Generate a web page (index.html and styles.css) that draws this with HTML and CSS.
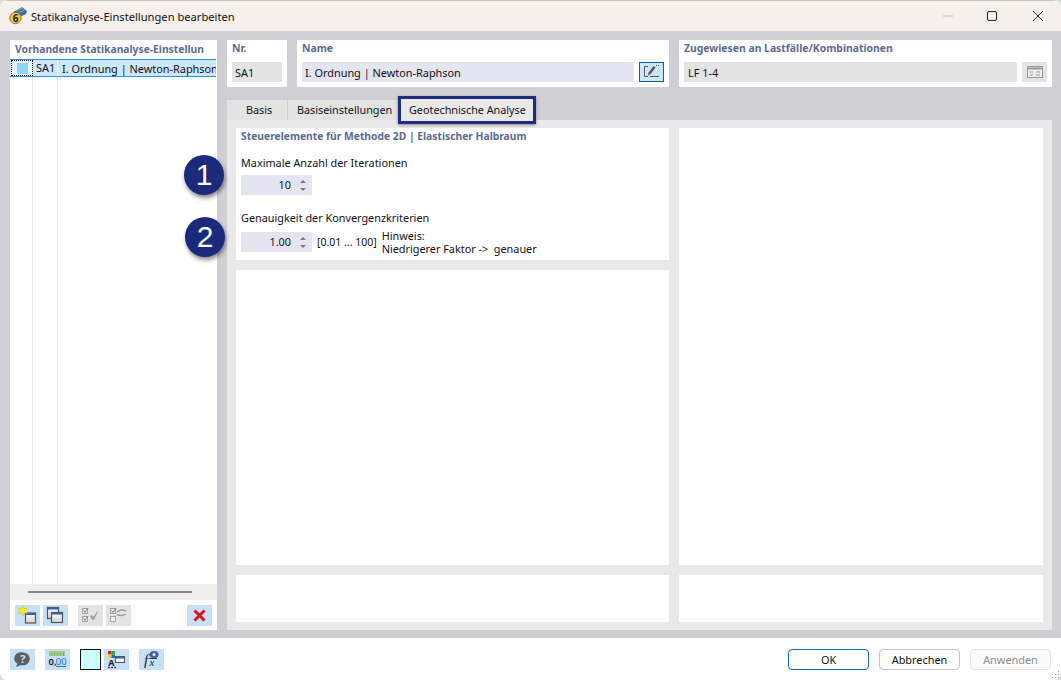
FILE: index.html
```html
<!DOCTYPE html>
<html lang="de">
<head>
<meta charset="utf-8">
<title>Statikanalyse-Einstellungen bearbeiten</title>
<link rel="stylesheet" href="styles.css">
</head>
<body>
<div class="window">
  <header class="titlebar">
    <svg class="app-icon" width="18" height="18" viewBox="0 0 18 18"><path d="M5 5l8-4.500 4.500 3.500-1 3L9 10z" fill="#3f6f9e" stroke="#26486b" stroke-width=".6"/><path d="M7 4l7-3M9 6l6.500-3" stroke="#9fc0dc" stroke-width=".7"/><circle cx="6.500" cy="11" r="5.700" fill="#f0c83a" stroke="#77631c" stroke-width=".8"/><text x="6.500" y="14.700" class="six">6</text></svg>
    <span class="title-text">Statikanalyse-Einstellungen bearbeiten</span>
    <div class="win-controls">
      <svg width="10" height="2" viewBox="0 0 10 2"><path d="M0 1h10" stroke="#c0bcba"/></svg>
      <svg class="max" width="10" height="10" viewBox="0 0 10 10"><rect x=".5" y=".5" width="9" height="9" rx="1.500" fill="none" stroke="#222"/></svg>
      <svg class="close" width="10" height="10" viewBox="0 0 10 10"><path d="M0 0l10 10M10 0L0 10" stroke="#222"/></svg>
    </div>
  </header>
  <main class="body">
    <aside class="left">
      <div class="left-title">Vorhandene Statikanalyse-Einstellun</div>
      <div class="list">
        <div class="row">
          <span class="swatch-cell"><i class="swatch"></i></span>
          <span class="sa-cell">SA1</span>
          <span class="name-cell">I. Ordnung | Newton-Raphson</span>
        </div>
        <div class="guides"><i></i><i></i></div>
      </div>
      <div class="hscroll"><i></i></div>
      <div class="left-tools">
        <button class="tool"><svg width="25" height="21" viewBox="0 0 25 21"><defs><linearGradient id="w" x1="0" y1="0" x2="0" y2="1"><stop offset="0" stop-color="#fafafa"/><stop offset="1" stop-color="#d4d4d4"/></linearGradient></defs><rect x="10.500" y="8" width="10" height="10" fill="url(#w)" stroke="#555" stroke-width="1.200"/><rect x="10.500" y="8" width="10" height="2" fill="#3b5fa8"/><path d="M7.700.2L8.900 3.600 12.500 3 10.100 5.700 12.500 8.500 8.900 7.800 7.700 11.200 6.500 7.800 2.900 8.500 5.300 5.700 2.900 3 6.500 3.600z" fill="#f8f020" stroke="#c9bd10" stroke-width=".4"/></svg></button>
        <button class="tool"><svg width="25" height="21" viewBox="0 0 25 21"><rect x="4.500" y="2.500" width="11" height="11" fill="url(#w)" stroke="#555" stroke-width="1.200"/><rect x="4.500" y="2.500" width="11" height="2" fill="#3b5fa8"/><rect x="8.500" y="7.500" width="11" height="10" fill="url(#w)" stroke="#555" stroke-width="1.200"/><rect x="8.500" y="7.500" width="11" height="2" fill="#3b5fa8"/></svg></button>
        <button class="tool off"><svg width="25" height="21" viewBox="0 0 25 21"><g fill="#eee" stroke="#a5a5a5"><rect x="4.500" y="3.500" width="5" height="5"/><rect x="4.500" y="11.500" width="5" height="5"/></g><path d="M5.500 5.500l1.500 2 3-4.500M5.500 13.500l1.500 2 3-4.500" fill="none" stroke="#7d7d7d"/><path d="M12 11l2-1 1.500 2 3.500-5.500.8.500-4 8h-1.500z" fill="#9c9c9c"/></svg></button>
        <button class="tool off"><svg width="25" height="21" viewBox="0 0 25 21"><g fill="#eee" stroke="#a5a5a5"><rect x="4.500" y="3.500" width="5" height="5"/><rect x="4.500" y="11.500" width="5" height="5"/></g><path d="M5.500 5.500l1.500 2 3-4.500" fill="none" stroke="#7d7d7d"/><path d="M11 7c3-2.500 6-2.500 9-1M20 9c-3 2-6 2-9 .5" fill="none" stroke="#9c9c9c" stroke-width="1.500"/></svg></button>
        <button class="tool del"><svg width="25" height="21" viewBox="0 0 25 21"><path d="M7.500 5.500l10 10M17.500 5.500l-10 10" stroke="#e2101a" stroke-width="3"/></svg></button>
      </div>
    </aside>
    <section class="right">
      <div class="top">
        <div class="card nr">
          <div class="card-title">Nr.</div>
          <div class="field gray">SA1</div>
        </div>
        <div class="card name">
          <div class="card-title">Name</div>
          <div class="field-row">
            <div class="field lilac grow">I. Ordnung | Newton-Raphson</div>
            <button class="edit-btn"><svg width="23" height="18" viewBox="0 0 23 18"><path d="M8 3.500H4.500v10H8M10 13.500h9" fill="none" stroke="#555"/><path d="M8 12.500l.6-3 5-6.500 2 1.500-5 6.500z" fill="#555"/><path d="M16 2.500h3" stroke="#555" stroke-dasharray="1 1"/></svg></button>
          </div>
        </div>
        <div class="card assigned">
          <div class="card-title">Zugewiesen an Lastfälle/Kombinationen</div>
          <div class="field-row">
            <div class="field gray grow lf">LF 1-4</div>
            <span class="list-btn"><svg width="16" height="12" viewBox="0 0 16 12"><rect x=".5" y=".5" width="15" height="11" fill="#eee" stroke="#979797"/><path d="M.5 2.500h15" stroke="#979797" stroke-width="2"/><path d="M3 6h3M9 6h4M3 9h3M9 9h4" stroke="#979797"/></svg></span>
          </div>
        </div>
      </div>
      <nav class="tabs">
        <span class="tab">Basis</span>
        <span class="tab">Basiseinstellungen</span>
        <span class="tab active">Geotechnische Analyse</span>
      </nav>
      <div class="tab-body">
        <div class="col">
          <div class="panel controls">
            <div class="card-title">Steuerelemente für Methode 2D | Elastischer Halbraum</div>
            <div class="label first">Maximale Anzahl der Iterationen</div>
            <div class="spin-row">
              <div class="spin"><span class="val">10</span><span class="arrows"><i class="up"></i><i class="down"></i></span></div>
            </div>
            <div class="label second">Genauigkeit der Konvergenzkriterien</div>
            <div class="spin-row lower">
              <div class="spin"><span class="val">1.00</span><span class="arrows"><i class="up"></i><i class="down"></i></span></div>
              <span class="range">[0.01 ... 100]</span>
              <span class="hint">Hinweis:<br>Niedrigerer Faktor -&gt; &nbsp;genauer</span>
            </div>
          </div>
          <div class="panel fill"></div>
          <div class="panel foot"></div>
        </div>
        <div class="col">
          <div class="panel fill"></div>
          <div class="panel foot"></div>
        </div>
      </div>
    </section>
    <span class="badge b1">1</span>
    <span class="badge b2">2</span>
  </main>
  <footer class="footer">
    <div class="foot-tools">
      <button class="tool"><svg width="25" height="21" viewBox="0 0 25 21"><path d="M13 3.500a6.700 6.300 0 0 1 0 12.800h-2.500L6 18l1.300-3.200A6.700 6.300 0 0 1 13 3.500z" fill="#5f5f5f"/><text x="12.800" y="13.800" class="qm">?</text></svg></button>
      <button class="tool"><svg width="25" height="21" viewBox="0 0 25 21"><rect x="4" y="2" width="16" height="5" fill="#9ccc80"/><path d="M6.500 4v3M9.500 4v3M12.500 4v3M15.500 4v3M18.500 4v3" stroke="#78a860" stroke-width=".7"/><text x="3.500" y="16" class="num">0,</text><text x="10.800" y="16" class="num blue">00</text><path d="M11 17.500h10" stroke="#2a6ecc"/></svg></button>
      <span class="color-box"></span>
      <button class="tool"><svg width="25" height="21" viewBox="0 0 25 21"><rect x="4" y="2" width="3.500" height="3.500" fill="#d22"/><rect x="7.500" y="2" width="3.500" height="3.500" fill="#3a3"/><rect x="4" y="5.500" width="3.500" height="3.500" fill="#fc0"/><rect x="7.500" y="5.500" width="3.500" height="3.500" fill="#36c"/><text x="4.300" y="16.500" class="a">A</text><rect x="11.500" y="7.500" width="9" height="6" fill="#f3f3f3" stroke="#555"/><rect x="11.500" y="7.500" width="9" height="2" fill="#3b5fa8"/><path d="M4 18.500h2M7 18.500h2M10 18.500h2" stroke="#444" stroke-width="1.500"/></svg></button>
      <button class="tool"><svg width="25" height="21" viewBox="0 0 25 21"><text x="5" y="16" class="fx">f</text><text x="10.500" y="17" class="fx small">x</text><path d="M10 9.500h8" stroke="#333"/><ellipse cx="15" cy="5.500" rx="4.500" ry="3.500" fill="#3f5f9f"/><circle cx="15" cy="5.500" r="1.500" fill="#e6eef8"/></svg></button>
    </div>
    <div class="actions">
      <button class="btn primary">OK</button>
      <button class="btn">Abbrechen</button>
      <button class="btn disabled">Anwenden</button>
    </div>
    <svg class="grip" width="10" height="10" viewBox="0 0 10 10"><path d="M7 1h1v1H7zM4 4h1v1H4zM7 4h1v1H7zM1 7h1v1H1zM4 7h1v1H4zM7 7h1v1H7z" fill="#999"/></svg>
  </footer>
</div>
</body>
</html>
```
FILE: styles.css
```css
* { box-sizing: border-box; }
html, body { margin: 0; padding: 0; height: 100%; background: #dcdcdc; }
body { font-family: "Noto Sans", "Open Sans", sans-serif; font-size: 10.900px; color: #111; overflow: hidden; }
button { font: inherit; border: 0; padding: 0; background: none; }
.window { width: 1061px; height: 680px; display: flex; flex-direction: column; background: #fff; border-radius: 8px; overflow: hidden; position: relative; }
.titlebar { height: 31px; flex: none; display: flex; align-items: center; background: #f6efeb; padding-left: 9px; border-top: 1px solid #c8c4c2; }
.app-icon { flex: none; }
.six { font: bold 10px "Noto Sans", sans-serif; fill: #1a1a1a; text-anchor: middle; }
.title-text { margin-left: 4px; font-size: 11.150px; color: #111; }
.win-controls { margin-left: auto; display: flex; align-items: center; gap: 35px; padding-right: 18px; }
.win-controls .max { margin-left: -1px; }
.win-controls .close { margin-left: 1px; }
.body { position: relative; flex: 1; background: #d0cfd4; display: flex; padding: 9px 9px 8px 10px; gap: 10px; }
.left { width: 207px; flex: none; background: #fff; display: flex; flex-direction: column; }
.left-title { font-weight: 700; font-size: 10.300px; color: #5b6a93; padding: 2px 12px 0 5px; height: 18px; white-space: nowrap; overflow: hidden; }
.list { flex: 1; position: relative; overflow: hidden; }
.row { height: 18px; margin-top: 1px; margin-right: 1px; display: flex; align-items: center; background: #cde8fb; border-top: 1px solid #2d8fdc; border-bottom: 1px solid #2d8fdc; position: relative; z-index: 1; white-space: nowrap; overflow: hidden; }
.swatch-cell { width: 22px; height: 100%; flex: none; border: 1px dotted #111; margin-left: 1px; display: flex; align-items: center; justify-content: center; background: #e8f4fd; }
.swatch { width: 11px; height: 11px; background: #8fd5f8; display: block; }
.sa-cell { width: 25px; flex: none; padding-left: 3px; border-right: 1px solid #fff; line-height: 18px; }
.name-cell { padding-left: 4px; }
.guides i { position: absolute; top: 0; bottom: 0; width: 1px; background: #e6e6e6; }
.guides i:nth-child(1) { left: 22px; }
.guides i:nth-child(2) { left: 47px; }
.hscroll { height: 16px; flex: none; background: #efefef; display: flex; align-items: center; padding: 0 25px 0 18px; }
.hscroll i { display: block; height: 2.500px; width: 100%; background: #858585; }
.left-tools { height: 30px; flex: none; display: flex; align-items: center; gap: 3px; padding: 0 5px; }
.tool { width: 25px; height: 21px; display: flex; align-items: center; justify-content: center; background: #c6e1f7; flex: none; }
.tool.off { background: #e3e3e3; }
.left-tools .tool:nth-child(3) { margin-left: 7px; }
.tool.del { margin-left: auto; }
.right { flex: 1; display: flex; flex-direction: column; min-width: 0; }
.top { display: flex; gap: 10px; height: 47px; flex: none; }
.card { background: #fff; padding: 2px 5px; }
.card-title { font-weight: 700; font-size: 10.400px; color: #5b6a93; line-height: 13px; white-space: nowrap; }
.nr { width: 60px; }
.name { width: 372px; }
.assigned { width: 373px; }
.field { height: 20px; line-height: 22px; padding-left: 3px; margin-top: 7px; white-space: nowrap; }
.gray { background: #e4e4e4; }
.lf { padding-left: 4px; }
.lilac { background: #e5e5f2; }
.field-row { display: flex; gap: 5px; }
.grow { flex: 1; }
.edit-btn { width: 25px; height: 20px; margin-top: 7px; background: #cde6fa; border: 1px solid #0e5f9e; display: flex; align-items: center; justify-content: center; }
.list-btn { width: 25px; height: 20px; margin-top: 7px; background: #e4e4e4; display: flex; align-items: center; justify-content: center; }
.tabs { display: flex; height: 20px; margin-top: 13px; flex: none; position: relative; z-index: 2; font-size: 10.800px; }
.tab { height: 20px; width: 61px; flex: none; line-height: 20px; background: #e3e3e3; padding-left: 19px; border-right: 1px solid #d0cfd4; white-space: nowrap; }
.tab:nth-child(2) { width: 110px; padding-left: 9px; border-right: 0; }
.tab.active { width: 138px; background: #e9e9e9; padding-left: 8px; height: 28px; margin-top: -4px; line-height: 22px; border: 3px solid #1f2d80; box-shadow: 0 1px 3px #888; }
.tab-body { flex: 1; background: #e9e9e9; display: flex; gap: 10px; padding: 8px 9px; }
.col { display: flex; flex-direction: column; gap: 10px; }
.col:first-child { width: 433px; }
.col:last-child { width: 364px; }
.panel { background: #fff; }
.controls { height: 132px; padding: 2px 5px; font-size: 10.850px; flex: none; }
.controls .card-title { font-size: 10.300px; }
.fill { flex: 1; }
.foot { height: 47px; flex: none; }
.label { line-height: 14px; white-space: nowrap; }
.label.first { margin-top: 13px; }
.label.second { margin-top: 16px; }
.spin-row { display: flex; align-items: flex-start; margin-top: 5px; }
.spin-row.lower { margin-top: 7px; }
.spin { width: 71px; height: 20px; background: #e5e5f2; display: flex; align-items: center; justify-content: flex-end; flex: none; }
.val { line-height: 20px; }
.arrows { width: 21px; height: 20px; padding-left: 3px; display: flex; flex-direction: column; align-items: center; justify-content: center; gap: 5px; }
.arrows i { width: 0; height: 0; border-left: 3px solid transparent; border-right: 3px solid transparent; }
.arrows .up { border-bottom: 3px solid #777; }
.arrows .down { border-top: 3px solid #777; }
.range { margin-left: 5px; line-height: 20px; font-size: 10.500px; white-space: nowrap; }
.hint { margin-left: 5px; line-height: 13px; margin-top: -3px; white-space: nowrap; }
.badge { position: absolute; width: 40px; height: 40px; border-radius: 50%; background: #1b2a7c; color: #fff; font: 30px/40px "Liberation Sans", sans-serif; text-align: center; box-shadow: 1px 3px 4px rgba(0,0,0,.45); }
.b1 { left: 184px; top: 124px; }
.b2 { left: 185px; top: 186px; }
.footer { height: 42px; flex: none; display: flex; align-items: center; padding: 0 10px; position: relative; background: #fff; }
.foot-tools { display: flex; align-items: center; }
.foot-tools > :nth-child(2) { margin-left: 10px; }
.foot-tools > :nth-child(4) { margin-left: 3px; }
.foot-tools > :nth-child(5) { margin-left: 10px; }
.color-box { width: 21px; height: 21px; margin-left: 10px; background: #ccffff; border: 1px solid #111; flex: none; }
.actions { margin-left: auto; display: flex; gap: 10px; }
.btn { width: 81px; height: 21px; background: #fdfdfd; border: 1px solid #c4c4c4; border-radius: 4px; color: #111; }
.btn.primary { border-color: #0f6cbd; }
.btn.disabled { color: #8c8c8c; border-color: #e5e5e5; background: #fbfbfb; }
.grip { position: absolute; right: 0; bottom: 0; }
.qm { font: bold 11px "Noto Sans", sans-serif; fill: #c6e1f7; text-anchor: middle; }
.num { font: 9.500px "Noto Sans", sans-serif; font-weight: 600; fill: #222; }
.num.blue { fill: #2a6ecc; font-weight: 400; }
.a { font: bold 9px "Noto Sans", sans-serif; fill: #222; }
.fx { font: italic 15px "Liberation Serif", serif; fill: #222; }
.fx.small { font-size: 11px; }
```
